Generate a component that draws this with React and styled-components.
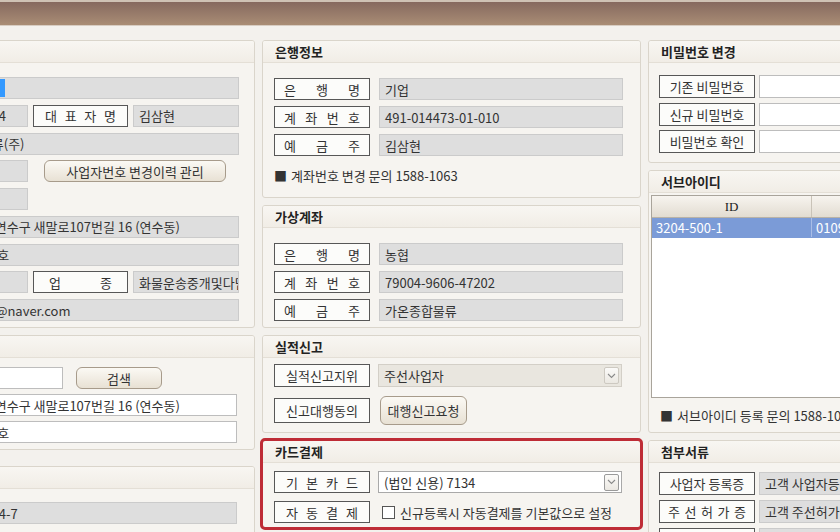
import React from 'react';
import styled, { createGlobalStyle } from 'styled-components';

const GlobalStyle = createGlobalStyle`
  * { box-sizing: border-box; }
  html, body {
    margin: 0;
    padding: 0;
    background: #f3f1ed;
    overflow: hidden;
  }
  body {
    font-family: "Noto Sans CJK KR", "Noto Sans", sans-serif;
    font-size: 13px;
    color: #2b2b2b;
  }
`;

const TopBar = styled.div`
    height: 26px;
    background: linear-gradient(#86695f, #a98d75);
    border-top: 2px solid #cfc2b5;
    border-bottom: 1px solid #d8cdc2;
`;

const Page = styled.div`
    display: flex;
    align-items: flex-start;
    gap: 7px;
    margin-left: -195px;
    padding-top: 14px;
    width: max-content;
`;

const Column = styled.div`
    display: flex;
    flex-direction: column;
    gap: 7px;
    width: ${(p) => p.$w}px;
    flex-shrink: 0;
`;

const Panel = styled.div`
    height: ${(p) => p.$h}px;
    margin-top: ${(p) => p.$mt || 0}px;
    background: #f6f4f0;
    border: 1px solid #dad5cb;
    border-radius: 3px;
    overflow: hidden;
    ${(p) => p.$alert && `outline: 3px solid #be2c36; outline-offset: -1px;`}
`;

const PanelTitle = styled.div`
    height: 22px;
    padding: 0 12px;
    display: flex;
    align-items: center;
    font-weight: 700;
    font-size: 13px;
    color: #222;
    background: linear-gradient(#f8f6f2, #f1ede6);
    border-bottom: 1px solid #e4dfd6;
`;

const PanelBody = styled.div`
    display: flex;
    flex-direction: column;
    gap: ${(p) => p.$gap}px;
    padding: ${(p) => p.$pad};
`;

const Row = styled.div`
    display: flex;
    align-items: center;
    gap: ${(p) => (p.$gap === undefined ? 5 : p.$gap)}px;
    height: ${(p) => p.$h || 22}px;
`;

const LabelBox = styled.div`
    width: ${(p) => p.$w || 96}px;
    height: ${(p) => p.$bh || '100%'};
    flex-shrink: 0;
    border: 1px solid #575757;
    background: #fcfcfa;
    display: flex;
    align-items: center;
    justify-content: ${(p) => (p.$spread ? 'space-between' : 'center')};
    padding: 0 ${(p) => p.$pad || 0}px;
    color: #333;
    white-space: nowrap;
`;

const Field = styled.div`
    flex: ${(p) => (p.$w ? `0 0 ${p.$w}px` : 1)};
    min-width: 0;
    height: 100%;
    background: ${(p) => (p.$white ? '#ffffff' : '#dedede')};
    border: 1px solid ${(p) => (p.$white ? '#bdbdbd' : '#cbcbcb')};
    padding: 0 5px;
    display: flex;
    align-items: center;
    white-space: nowrap;
    overflow: hidden;
    color: #333;
`;

const Selected = styled.span`
    display: inline-block;
    width: 73px;
    height: 18px;
    background: #3399ff;
    color: #fff;
    overflow: hidden;
`;

const Button = styled.button`
    width: ${(p) => p.$w}px;
    height: ${(p) => p.$bh || '100%'};
    margin-left: ${(p) => p.$ml || 0}px;
    flex-shrink: 0;
    border: 1px solid #a79b8b;
    border-radius: 6px;
    background: linear-gradient(#fbf9f4, #e8e1d4);
    font-family: inherit;
    font-size: 13px;
    color: #333;
    padding: 0;
`;

const SelectBox = styled.div`
    flex: 1;
    height: 100%;
    background: ${(p) => (p.$white ? '#ffffff' : '#e9e6df')};
    border: 1px solid ${(p) => (p.$white ? '#a9a9a9' : '#d3cfc7')};
    display: flex;
    align-items: center;
    justify-content: space-between;
    padding: 0 2px 0 5px;
    color: #333;
`;

const Arrow = styled.div`
    width: 15px;
    height: 17px;
    border: 1px solid ${(p) => (p.$dark ? '#9a9a9a' : '#cdc9c1')};
    border-radius: 2px;
    background: linear-gradient(#fbfaf8, #ebe8e2);
    display: flex;
    align-items: center;
    justify-content: center;
`;

const CheckBox = styled.span`
    width: 13px;
    height: 13px;
    border: 1px solid #555;
    background: #fff;
    flex-shrink: 0;
`;

const CheckLabel = styled.label`
    display: flex;
    align-items: center;
    gap: 5px;
    margin-left: 4px;
    color: #333;
`;

const Note = styled.div`
    display: flex;
    align-items: center;
    gap: 4px;
    height: 16px;
    margin-top: ${(p) => p.$mt || 0}px;
    color: #333;
`;

const Table = styled.div`
    margin: 2px 2px 0 2px;
    height: 203px;
    background: #fff;
    border: 1px solid #a9a49b;
`;

const TableRow = styled.div`
    display: grid;
    grid-template-columns: 160px 1fr;
    height: ${(p) => (p.$head ? 22 : 20)}px;
    background: ${(p) => (p.$head ? 'linear-gradient(#f7f4ef, #e2dcd1)' : '#7b9bd7')};
    color: ${(p) => (p.$head ? '#222' : '#fff')};
    border-bottom: 1px solid ${(p) => (p.$head ? '#b8b2a7' : '#7b9bd7')};
`;

const Cell = styled.div`
    display: flex;
    align-items: center;
    justify-content: ${(p) => (p.$head ? 'center' : 'flex-start')};
    padding-left: ${(p) => (p.$head ? 0 : 4)}px;
    border-right: 1px solid ${(p) => (p.$head ? '#c9c3b8' : '#a9bde6')};
    font-family: ${(p) => (p.$head ? '"Liberation Serif", serif' : 'inherit')};
    white-space: nowrap;
    overflow: hidden;
`;

const NoteBar = styled.div`
    height: 34px;
    padding-left: 11px;
    display: flex;
    align-items: center;
`;

const Chevron = () => (
    <svg width="9" height="6" viewBox="0 0 9 6">
        <path d="M1 1 L4.5 4.5 L8 1" fill="none" stroke="#8a8a8a" strokeWidth="1.1" />
    </svg>
);

const Label = ({ text, spread, w, pad, bh }) => (
    <LabelBox $spread={spread} $w={w} $pad={pad} $bh={bh}>
        {spread ? text.split(' ').map((c, i) => <span key={i}>{c}</span>) : text}
    </LabelBox>
);

const App = () => {
    return (
        <>
            <GlobalStyle />
            <TopBar />
            <Page>
                <Column $w={450}>
                    <Panel $h={288}>
                        <PanelTitle>회원정보</PanelTitle>
                        <PanelBody $gap={5.75} $pad="14px 15px 0 19px">
                            <Row>
                                <Label text="아이디" />
                                <Field><Selected>gaon3204</Selected></Field>
                            </Row>
                            <Row>
                                <Label text="사업자번호" />
                                <Field $w={102}>131-86-1234</Field>
                                <Label text="대 표 자 명" spread w={95} pad={11} />
                                <Field>김삼현</Field>
                            </Row>
                            <Row>
                                <Label text="상 호" spread pad={14} />
                                <Field>가온종합물류(주)</Field>
                            </Row>
                            <Row>
                                <Label text="법인번호" />
                                <Field $w={102} />
                                <Button $w={182} $ml={11}>사업자번호 변경이력 관리</Button>
                            </Row>
                            <Row>
                                <Label text="개업일자" />
                                <Field $w={102} />
                            </Row>
                            <Row>
                                <Label text="주 소" spread pad={14} />
                                <Field>인천광역시 연수구 새말로107번길 16 (연수동)</Field>
                            </Row>
                            <Row>
                                <Label text="상세주소" />
                                <Field>대우빌딩 21호</Field>
                            </Row>
                            <Row>
                                <Label text="업 태" spread pad={14} />
                                <Field $w={102} />
                                <Label text="업 종" spread w={95} pad={15} />
                                <Field>화물운송중개및다단계주선</Field>
                            </Row>
                            <Row>
                                <Label text="이메일" />
                                <Field>samhyun7@naver.com</Field>
                            </Row>
                        </PanelBody>
                    </Panel>
                    <Panel $h={115}>
                        <PanelTitle>사업장 주소</PanelTitle>
                        <PanelBody $gap={5} $pad="9px 17px 0 19px">
                            <Row>
                                <Label text="우편번호" />
                                <Field $w={137} $white>21998</Field>
                                <Button $w={86} $ml={8}>검색</Button>
                            </Row>
                            <Row>
                                <Label text="주 소" spread pad={14} />
                                <Field $white>인천광역시 연수구 새말로107번길 16 (연수동)</Field>
                            </Row>
                            <Row>
                                <Label text="상세주소" />
                                <Field $white>대우빌딩 21호</Field>
                            </Row>
                        </PanelBody>
                    </Panel>
                    <Panel $h={120} $mt={9}>
                        <PanelTitle>차량정보</PanelTitle>
                        <PanelBody $gap={5} $pad="13px 17px 0 19px">
                            <Row>
                                <Label text="차량번호" />
                                <Field>000-00-1234-7</Field>
                            </Row>
                        </PanelBody>
                    </Panel>
                </Column>

                <Column $w={379}>
                    <Panel $h={158}>
                        <PanelTitle>은행정보</PanelTitle>
                        <PanelBody $gap={6} $pad="15px 17px 0 11px">
                            <Row $gap={9}>
                                <Label text="은 행 명" spread pad={9} />
                                <Field>기업</Field>
                            </Row>
                            <Row $gap={9}>
                                <Label text="계 좌 번 호" spread pad={9} />
                                <Field>491-014473-01-010</Field>
                            </Row>
                            <Row $gap={9}>
                                <Label text="예 금 주" spread pad={9} />
                                <Field>김삼현</Field>
                            </Row>
                            <Note $mt={5}><span>■</span>계좌번호 변경 문의 1588-1063</Note>
                        </PanelBody>
                    </Panel>
                    <Panel $h={123}>
                        <PanelTitle>가상계좌</PanelTitle>
                        <PanelBody $gap={6} $pad="15px 17px 0 11px">
                            <Row $gap={9}>
                                <Label text="은 행 명" spread pad={9} />
                                <Field>농협</Field>
                            </Row>
                            <Row $gap={9}>
                                <Label text="계 좌 번 호" spread pad={9} />
                                <Field>79004-9606-47202</Field>
                            </Row>
                            <Row $gap={9}>
                                <Label text="예 금 주" spread pad={9} />
                                <Field>가온종합물류</Field>
                            </Row>
                        </PanelBody>
                    </Panel>
                    <Panel $h={98}>
                        <PanelTitle>실적신고</PanelTitle>
                        <PanelBody $gap={9} $pad="6px 18px 0 11px">
                            <Row $gap={8} $h={23}>
                                <Label text="실적신고지위" />
                                <SelectBox>
                                    주선사업자
                                    <Arrow><Chevron /></Arrow>
                                </SelectBox>
                            </Row>
                            <Row $gap={10} $h={29}>
                                <Label text="신고대행동의" bh="25px" />
                                <Button $w={87}>대행신고요청</Button>
                            </Row>
                        </PanelBody>
                    </Panel>
                    <Panel $h={88} $alert>
                        <PanelTitle>카드결제</PanelTitle>
                        <PanelBody $gap={8} $pad="8px 18px 0 11px">
                            <Row $gap={8}>
                                <Label text="기 본 카 드" spread pad={11} />
                                <SelectBox $white>
                                    (법인 신용) 7134
                                    <Arrow $dark><Chevron /></Arrow>
                                </SelectBox>
                            </Row>
                            <Row $gap={8}>
                                <Label text="자 동 결 제" spread pad={11} />
                                <CheckLabel>
                                    <CheckBox />
                                    신규등록시 자동결제를 기본값으로 설정
                                </CheckLabel>
                            </Row>
                        </PanelBody>
                    </Panel>
                </Column>

                <Column $w={270}>
                    <Panel $h={123}>
                        <PanelTitle>비밀번호 변경</PanelTitle>
                        <PanelBody $gap={4.5} $pad="12px 0 0 10px">
                            <Row $gap={4} $h={23}>
                                <Label text="기존 비밀번호" />
                                <Field $white />
                            </Row>
                            <Row $gap={4} $h={23}>
                                <Label text="신규 비밀번호" />
                                <Field $white />
                            </Row>
                            <Row $gap={4} $h={23}>
                                <Label text="비밀번호 확인" />
                                <Field $white />
                            </Row>
                        </PanelBody>
                    </Panel>
                    <Panel $h={263}>
                        <PanelTitle>서브아이디</PanelTitle>
                        <Table>
                            <TableRow $head>
                                <Cell $head>ID</Cell>
                                <Cell $head>연락처</Cell>
                            </TableRow>
                            <TableRow>
                                <Cell>3204-500-1</Cell>
                                <Cell>01098467134</Cell>
                            </TableRow>
                        </Table>
                        <NoteBar>
                            <Note><span>■</span>서브아이디 등록 문의 1588-1063</Note>
                        </NoteBar>
                    </Panel>
                    <Panel $h={120}>
                        <PanelTitle>첨부서류</PanelTitle>
                        <PanelBody $gap={5} $pad="9px 0 0 10px">
                            <Row $gap={4} $h={23}>
                                <Label text="사업자 등록증" />
                                <Field>고객 사업자등록증.pdf</Field>
                            </Row>
                            <Row $gap={4} $h={23}>
                                <Label text="주 선 허 가 증" spread pad={8} />
                                <Field>고객 주선허가증.pdf</Field>
                            </Row>
                            <Row $gap={4} $h={23}>
                                <Label text="통 장 사 본" spread pad={8} />
                                <Field>고객 통장사본.pdf</Field>
                            </Row>
                        </PanelBody>
                    </Panel>
                </Column>
            </Page>
        </>
    );
};

export default App;
